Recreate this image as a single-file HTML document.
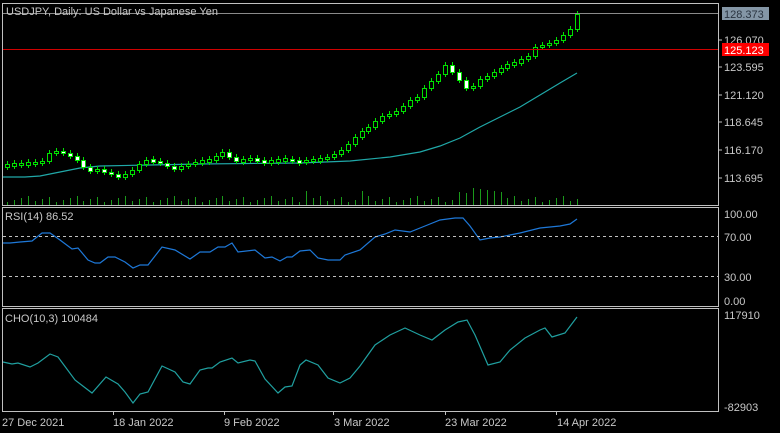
<!DOCTYPE html>
<html><head><meta charset="utf-8"><style>
html,body{margin:0;padding:0;background:#000;width:780px;height:433px;overflow:hidden}
svg{display:block}
text{font-family:"Liberation Sans",sans-serif;font-size:11px;fill:#c8c8c8}
</style></head><body>
<svg id="s" width="780" height="433" xmlns="http://www.w3.org/2000/svg">
<rect width="780" height="433" fill="#000"/>
<g id="g"></g>
<rect x="2.5" y="3.5" width="716" height="202" fill="none" stroke="#c0c0c0"/>
<rect x="2.5" y="207.5" width="716" height="99" fill="none" stroke="#c0c0c0"/>
<rect x="2.5" y="308.5" width="716" height="103" fill="none" stroke="#c0c0c0"/>
<line x1="3" y1="49.5" x2="718" y2="49.5" stroke="#d00000" shape-rendering="crispEdges"/>
<line x1="3" y1="13.5" x2="718" y2="13.5" stroke="#8a8a8a"/>
<line x1="3" y1="236.5" x2="718" y2="236.5" stroke="#c0c0c0" stroke-dasharray="3,3"/>
<line x1="3" y1="276.5" x2="718" y2="276.5" stroke="#c0c0c0" stroke-dasharray="3,3"/>
<text x="6" y="15">USDJPY, Daily:  US Dollar vs Japanese Yen</text>
<text x="5" y="220">RSI(14) 86.52</text>
<text x="5" y="322">CHO(10,3) 100484</text>
<g>
<line x1="719" y1="40" x2="722" y2="40" stroke="#c0c0c0"/>
<line x1="719" y1="67" x2="722" y2="67" stroke="#c0c0c0"/>
<line x1="719" y1="95" x2="722" y2="95" stroke="#c0c0c0"/>
<line x1="719" y1="122" x2="722" y2="122" stroke="#c0c0c0"/>
<line x1="719" y1="150" x2="722" y2="150" stroke="#c0c0c0"/>
<line x1="719" y1="178" x2="722" y2="178" stroke="#c0c0c0"/>
<text x="724" y="44">126.070</text>
<text x="724" y="71">123.595</text>
<text x="724" y="99">121.120</text>
<text x="724" y="126">118.645</text>
<text x="724" y="154">116.170</text>
<text x="724" y="182">113.695</text>
<rect x="722" y="7" width="47" height="13" fill="#8496a6"/>
<text x="724" y="18" style="fill:#2a3440">128.373</text>
<rect x="722" y="43" width="47" height="13" fill="#ff0000"/>
<text x="724" y="54" style="fill:#fff">125.123</text>
<text x="724" y="218">100.00</text>
<text x="724" y="241">70.00</text>
<text x="724" y="281">30.00</text>
<text x="724" y="305">0.00</text>
<text x="724" y="319">117910</text>
<text x="724" y="411">-82903</text>
</g>
<g>
<line x1="113.5" y1="412" x2="113.5" y2="415" stroke="#c0c0c0"/>
<line x1="224.5" y1="412" x2="224.5" y2="415" stroke="#c0c0c0"/>
<line x1="333.5" y1="412" x2="333.5" y2="415" stroke="#c0c0c0"/>
<line x1="445.5" y1="412" x2="445.5" y2="415" stroke="#c0c0c0"/>
<line x1="556.5" y1="412" x2="556.5" y2="415" stroke="#c0c0c0"/>
<text x="2" y="426">27 Dec 2021</text>
<text x="113" y="426">18 Jan 2022</text>
<text x="224" y="426">9 Feb 2022</text>
<text x="334" y="426">3 Mar 2022</text>
<text x="445" y="426">23 Mar 2022</text>
<text x="557" y="426">14 Apr 2022</text>
</g>
</svg>
<script>
(function(){
var g=document.getElementById('g'),NS='http://www.w3.org/2000/svg';
function el(t,a){var e=document.createElementNS(NS,t);for(var k in a)e.setAttribute(k,a[k]);g.appendChild(e);return e;}
function poly(p,c){el('polyline',{points:p.map(function(q){return q.join(',')}).join(' '),fill:'none',stroke:c,'stroke-width':1.2});}
poly([[3,177],[25,177],[40,176],[60,172],[80,168],[100,166],[150,165],[200,164],[300,163],[350,161],[390,157],[420,152],[440,146],[460,138],[480,127],[500,117],[520,107],[540,95],[560,83],[577,73]],'#20a8a8');
var c=[165,164,164,163,163,161,153,151,153,156,160,167,171,169,172,174,177,174,170,164,160,161,163,166,169,166,164,162,161,160,156,152,157,161,160,158,161,162,161,160,159,161,162,160,160,159,157,154,150,144,137,131,127,121,116,114,111,106,100,97,88,81,74,65,72,80,88,86,79,76,72,68,64,63,59,56,47,45,43,40,35,29,14];
var prev=166,n=c.length;
for(var i=0;i<n;i++){
 var x=Math.round(7+i*570/(n-1)),o=prev,cl=c[i];prev=cl;
 var tp=Math.min(o,cl),bt=Math.max(o,cl);if(bt-tp<2){tp-=1;bt+=1;}
 var up=cl<=o;
 el('line',{x1:x+.5,y1:tp-3,x2:x+.5,y2:bt+3,stroke:'#00e000'});
 el('rect',{x:x-1.5,y:tp+.5,width:4,height:bt-tp,fill:up?'#000':'#fff',stroke:'#00e000','stroke-width':1});
 var vh=3+((i*37)%7);if(i>64&&i<72)vh=12+((i*5)%6);if(i==51||i==43)vh=14;
 el('line',{x1:x+.5,y1:205,x2:x+.5,y2:205-vh,stroke:'#1a9a1a'});
}
poly([[3,243],[10,243],[20,242],[32,241],[42,233],[50,233],[60,240],[72,249],[78,248],[88,260],[95,263],[100,263],[108,257],[115,257],[125,262],[133,268],[140,265],[148,265],[162,247],[175,250],[190,259],[200,252],[210,252],[218,247],[225,247],[232,243],[238,252],[255,250],[265,258],[272,257],[280,261],[287,257],[292,257],[300,251],[310,250],[318,258],[328,260],[340,260],[345,255],[360,250],[375,237],[385,234],[395,230],[410,232],[425,226],[440,220],[455,218],[463,218],[470,226],[480,240],[490,238],[500,237],[520,233],[540,228],[560,226],[570,224],[577,219]],'#1e78d8');
poly([[3,362],[12,364],[18,363],[30,367],[38,363],[50,354],[58,357],[75,380],[92,393],[106,377],[118,384],[125,392],[133,403],[140,394],[148,392],[162,366],[175,372],[183,382],[190,384],[200,370],[208,368],[212,368],[220,362],[232,358],[238,363],[250,360],[255,361],[265,379],[278,393],[285,387],[292,386],[300,365],[306,360],[318,365],[328,378],[340,383],[350,378],[360,366],[375,345],[390,335],[405,328],[420,335],[432,340],[445,330],[458,322],[467,320],[475,335],[488,365],[500,362],[510,350],[525,338],[540,330],[545,328],[552,337],[565,333],[577,317]],'#20a0a0');
})();
</script>
</body></html>
